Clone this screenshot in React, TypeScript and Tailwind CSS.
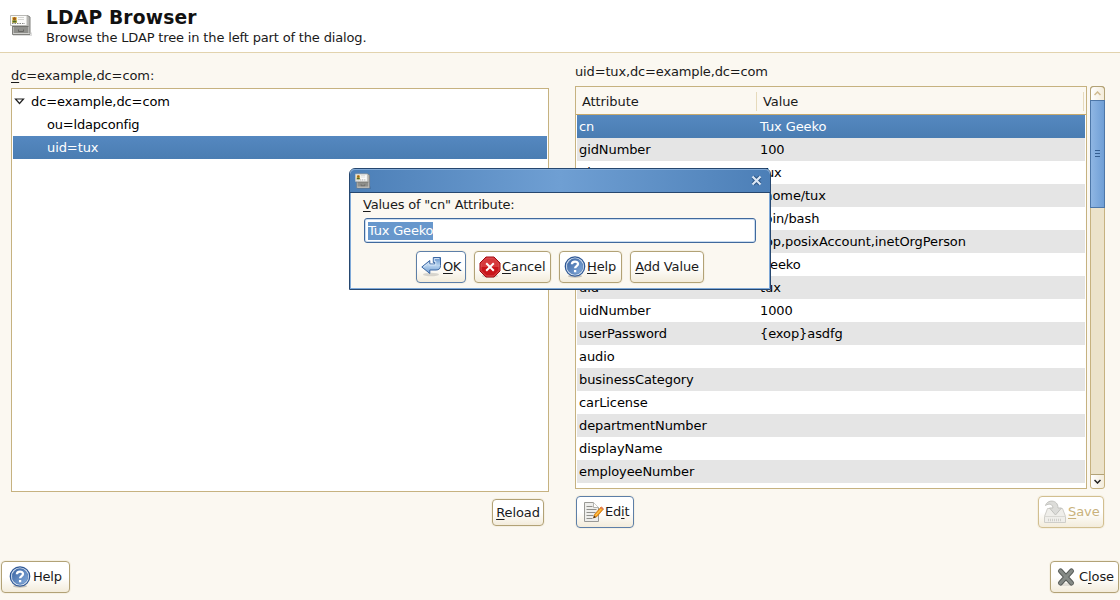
import React from "react";

const ROWS: [string, string][] = [
  ["cn", "Tux Geeko"],
  ["gidNumber", "100"],
  ["givenName", "Tux"],
  ["homeDirectory", "/home/tux"],
  ["loginShell", "/bin/bash"],
  ["objectClass", "top,posixAccount,inetOrgPerson"],
  ["sn", "Geeko"],
  ["uid", "tux"],
  ["uidNumber", "1000"],
  ["userPassword", "{exop}asdfg"],
  ["audio", ""],
  ["businessCategory", ""],
  ["carLicense", ""],
  ["departmentNumber", ""],
  ["displayName", ""],
  ["employeeNumber", ""],
];

function LdapIcon({ className }: { className: string }) {
  return (
    <svg viewBox="0 0 22 22" className={className}>
      <path d="M3 21.500h18.500v-3" fill="none" stroke="#00000022" />
      <path d="M2.500 1.500h15l2.500 1.500v17.500H2.500z" fill="#b4b4b1" stroke="#80807d" />
      <path d="M4 12h14v7H4z" fill="#8f8f8b" />
      <path d="M3 12.500h15.500" stroke="#72726e" />
      <path d="M3 19.500h16.500" stroke="#d0d0cd" />
      <path d="M8.500 15.500v2h5v-2" fill="none" stroke="#666663" />
      <path d="M.5 1.500h16.500v10H.5z" fill="#fbfbfa" stroke="#b9b9b5" />
      <path d="M2 3h5v6H2z" fill="#e9cf72" />
      <circle cx="4.500" cy="4.700" r="1.700" fill="#a45f16" />
      <path d="M2.500 6.500h4v2h-4z" fill="#4f6a24" />
      <path d="M8 3.500h6M8 5.500h6" stroke="#d4d4d0" />
      <path d="M2 9.500h13" stroke="#888" strokeDasharray="1.500 1" />
    </svg>
  );
}

function HelpIcon() {
  return (
    <svg viewBox="0 0 22 22" className="h-[22px] w-[22px] shrink-0">
      <defs>
        <linearGradient id="hb" x1="0" y1="0" x2="1" y2="1">
          <stop offset="0" stopColor="#3a62a0" />
          <stop offset="1" stopColor="#86aede" />
        </linearGradient>
      </defs>
      <ellipse cx="11" cy="20.200" rx="7" ry="1.600" fill="#00000033" />
      <circle cx="11" cy="10.500" r="9.700" fill="#e4edf8" stroke="#2f5896" strokeWidth="1.300" />
      <circle cx="11" cy="10.500" r="7.900" fill="url(#hb)" stroke="#4a73ad" strokeWidth=".6" />
      <path d="M7.900 8.300C7.900 4.700 14 4.700 14 8c0 2.100-2.900 2.100-2.900 4.300M11.100 14v2.200" fill="none" stroke="#fff" strokeWidth="2.300" />
    </svg>
  );
}

function OkIcon() {
  return (
    <svg viewBox="0 0 22 22" className="h-[22px] w-[22px] shrink-0">
      <defs>
        <linearGradient id="ok" x1="0" y1="0" x2="0" y2="1">
          <stop offset="0" stopColor="#5f8fc9" />
          <stop offset=".5" stopColor="#b9d4ef" />
          <stop offset="1" stopColor="#6a99d0" />
        </linearGradient>
      </defs>
      <ellipse cx="10" cy="18.500" rx="8" ry="1.800" fill="#00000022" />
      <path d="M.8 11l8-6.500V8h5V6.500h-1.500V1.500h7.200v8q0 4.500-4.500 4.500H8.800v3.500z" fill="url(#ok)" stroke="#3a66a3" strokeLinejoin="round" />
      <path d="M2.600 11l5.200-4.200V9h7V5.500h-1.500v-3h5" fill="none" stroke="#d9e8f8" strokeWidth=".9" />
    </svg>
  );
}

function CancelIcon() {
  return (
    <svg viewBox="0 0 22 22" className="h-[22px] w-[22px] shrink-0">
      <ellipse cx="11" cy="20" rx="8" ry="1.800" fill="#00000026" />
      <path d="M7 1h8l6 6v8l-6 6H7l-6-6V7z" fill="#c9151b" stroke="#9d0b10" />
      <path d="M7.400 2h7.200L20 7.400v3.600H2V7.400z" fill="#d63a3d" />
      <path d="M7.400 2h7.200L20 7.400v7.200L14.600 20H7.400L2 14.600V7.400z" fill="none" stroke="#e26467" strokeWidth=".7" />
      <path d="M7.200 7.200l7.600 7.600M14.800 7.200l-7.600 7.600" stroke="#fff" strokeWidth="2" />
    </svg>
  );
}

function EditIcon() {
  return (
    <svg viewBox="0 0 22 22" className="h-[22px] w-[22px] shrink-0">
      <path d="M2.500 1.500h9l5 5v14h-14z" fill="#eeeeec" stroke="#9a9a96" strokeLinejoin="round" />
      <path d="M11.500 1.500v5h5" fill="#fff" stroke="#b4b4b0" />
      <path d="M4.500 5.500h6M4.500 8.500h10M4.500 11.500h9M4.500 14.500h7M4.500 17.500h6" stroke="#90908c" />
      <path d="M11.500 17l1-3.500 6.500-7.500 2.500 2-6.500 7.500z" fill="#f59d18" stroke="#c46a08" strokeWidth=".7" />
      <path d="M13.500 14.500l6-6.700" stroke="#ffd166" />
      <path d="M11.300 17.200l.8-2.500 1.800 1.500z" fill="#333" />
      <path d="M18.300 6.800l1.200-1.200 2 2-1 1.200z" fill="#e5795a" />
    </svg>
  );
}

function SaveIcon() {
  return (
    <svg viewBox="0 0 24 24" className="h-6 w-6 shrink-0">
      <path d="M4.500 8.500h15l3 8v6h-21v-6z" fill="#efeeea" stroke="#cfcec9" />
      <path d="M1.500 16.500h21" stroke="#d9d8d3" />
      <path d="M5 20h14" stroke="#d0cfca" strokeWidth="2.500" strokeDasharray="1 1" />
      <path d="M2.500 5.500C4-.5 15-1 15 8h3.500l-6 7-6-7H10C9.500 4 6 3 2.500 5.500z" fill="#dcdcd9" stroke="#c2c2be" />
    </svg>
  );
}

function CloseIcon() {
  return (
    <svg viewBox="0 0 22 22" className="h-[22px] w-[22px] shrink-0">
      <ellipse cx="11" cy="18.500" rx="8" ry="1.600" fill="#00000018" />
      <path d="M5.500 5l11 12M16.500 5l-11 12" stroke="#565a57" strokeWidth="5" strokeLinecap="round" />
      <path d="M5.500 5l11 12M16.500 5l-11 12" stroke="#858a86" strokeWidth="3.200" strokeLinecap="round" />
    </svg>
  );
}

function Button({ className, children }: { className: string; children: React.ReactNode }) {
  return (
    <button
      className={`flex shrink-0 items-center rounded-[4px] border bg-linear-to-b from-white from-50% to-[#f3ecdb] whitespace-nowrap shadow-[0_0_0_1px_#f5f0e3] ${className}`}
    >
      {children}
    </button>
  );
}

function Key({ children }: { children: string }) {
  return <span className="underline decoration-1 underline-offset-2">{children}</span>;
}

export default function App() {
  return (
    <div className="relative flex h-[600px] w-[1120px] flex-col overflow-hidden bg-[#fbf8f1] font-['DejaVu_Sans',sans-serif] text-[13px] leading-[23px] tracking-[-0.09px] text-[#1a1a1a]">
      <header className="flex h-[53px] shrink-0 border-b border-[#e2d3ae] bg-white pl-[10px]">
        <LdapIcon className="mt-[14px] h-[22px] w-[22px]" />
        <div className="pl-[14px]">
          <h1 className="mt-[7px] text-[18.700px] leading-[21px] font-bold tracking-[0.170px] text-[#111]">LDAP Browser</h1>
          <p className="leading-[19px] tracking-[-0.155px]">Browse the LDAP tree in the left part of the dialog.</p>
        </div>
      </header>

      <main className="flex h-[482px] shrink-0 pl-[11px]">
        <section className="flex w-[538px] flex-col pt-[11px]">
          <div className="h-[24px]"><Key>d</Key>c=example,dc=com:</div>
          <div className="h-[404px] border border-[#c6b280] bg-white px-px pt-px">
            <div className="flex h-[23px] items-center">
              <svg viewBox="0 0 11 8" className="ml-[1px] h-2 w-[11px]">
                <path d="M1.500 1h8l-4 4.500z" fill="#fff" stroke="#222" strokeWidth="1.200" />
              </svg>
              <span className="pl-[6px] text-black">dc=example,dc=com</span>
            </div>
            <div className="h-[23px] pl-[34px] tracking-[-0.2px] text-black">ou=ldapconfig</div>
            <div className="h-[23px] bg-linear-to-b from-[#5588c0] to-[#4a7db2] pl-[34px] text-white">uid=tux</div>
          </div>
          <div className="flex justify-end pt-[7px] pr-[5px]">
            <Button className="h-[27px] w-[52px] justify-center border-[#b2a276]"><span><Key>R</Key>eload</span></Button>
          </div>
        </section>

        <section className="ml-[26px] flex w-[530px] flex-col pt-[7px]">
          <div className="h-[26px] tracking-[-0.150px]">uid=tux,dc=example,dc=com</div>
          <div className="flex h-[403px] gap-[3px]">
            <div className="w-[512px] border border-[#c6b280] bg-white px-px">
              <div className="-mx-px flex h-[28px] items-center border-b border-[#c6a96c] bg-[#fbf8f1] pt-[2px] pl-[6px]">
                <span className="w-[174px]">Attribute</span>
                <span className="h-[19px] w-px bg-[#e6dabb]" />
                <span className="flex-1 pl-[6px]">Value</span>
                <span className="mr-[2px] h-[19px] w-px bg-[#e6dabb]" />
              </div>
              {ROWS.map(([name, value], i) => (
                <div
                  key={name}
                  className={`flex h-[23px] pl-[2px] ${
                    i === 0 ? "bg-linear-to-b from-[#5588c0] to-[#4a7db2] text-white" : i % 2 ? "bg-[#e5e5e5] text-black" : "bg-white text-black"
                  }`}
                >
                  <span className="w-[181px]">{name}</span>
                  <span>{value}</span>
                </div>
              ))}
            </div>
            <div className="flex w-[15px] flex-col rounded-[3px] border border-[#c6b280] bg-[#ece3cb]">
              <div className="-mx-px -mt-px flex h-[14px] items-center justify-center rounded-t-[4px] border border-b-0 border-[#b2a276] bg-linear-to-r from-white to-[#f3ecdb]">
                <svg viewBox="0 0 7 5" className="h-[5px] w-[7px]"><path d="M.5 4l3-3 3 3" fill="none" stroke="#d0bb91" strokeWidth="1.500" /></svg>
              </div>
              <div className="-mx-px flex h-[108px] flex-col items-center justify-center gap-[2px] border border-[#4d77a8] bg-linear-to-r from-[#8fb6e3] to-[#6f9fd6] pb-[2px]">
                <span className="h-px w-[5px] bg-[#355f91]" />
                <span className="h-px w-[5px] bg-[#355f91]" />
                <span className="h-px w-[5px] bg-[#355f91]" />
              </div>
              <div className="mt-auto flex h-[14px] items-center justify-center rounded-b-[3px] border-t border-[#b2a276] bg-linear-to-r from-white to-[#f3ecdb]">
                <svg viewBox="0 0 7 5" className="h-[5px] w-[7px]"><path d="M.5 1l3 3 3-3" fill="none" stroke="#222" strokeWidth="1.500" /></svg>
              </div>
            </div>
          </div>
          <div className="flex justify-between pt-[7px] pr-[1px] pl-[1px]">
            <Button className="h-[32px] w-[58px] gap-[1px] border-[#5d7fa8] pl-[5px]"><EditIcon /><span className="pb-[2px] tracking-[-0.2px]">Ed<Key>i</Key>t</span></Button>
            <Button className="h-[32px] w-[66px] gap-[1px] border-[#d2bf90] pl-[4px] text-[#c9b27c]"><SaveIcon /><span className="pb-[2px]"><Key>S</Key>ave</span></Button>
          </div>
        </section>
      </main>

      <footer className="flex justify-between px-[1px] pt-[26px]">
        <Button className="h-[32px] w-[69px] gap-[2px] border-[#b2a276] pl-[7px]"><HelpIcon /><span className="pb-[2px] tracking-[-0.250px]">Help</span></Button>
        <Button className="h-[32px] w-[69px] gap-[2px] border-[#b2a276] pl-[4px]"><CloseIcon /><span className="pb-[2px]">C<Key>l</Key>ose</span></Button>
      </footer>

      <div className="absolute top-[168px] left-[349px] flex h-[122px] w-[422px] flex-col rounded-t-[6px] border border-[#26476f] bg-[#fbf8f1]">
        <div className="flex h-[24px] shrink-0 items-center justify-between rounded-t-[5px] border-b border-[#26476f] bg-linear-to-r from-[#4c7fb7] via-[#6f9fd3] to-[#4c7fb7] pr-[8px] pl-[5px] shadow-[inset_0_1px_0_#82abd8]">
          <LdapIcon className="h-[16px] w-[16px]" />
          <svg viewBox="0 0 11 11" className="h-[11px] w-[11px]">
            <path d="M2 2l7 7M9 2l-7 7" stroke="#2b5485" strokeWidth="4" />
            <path d="M1.500 1.500l8 8M9.500 1.500l-8 8" stroke="#dbe7f4" strokeWidth="2.200" />
          </svg>
        </div>
        <div className="flex flex-1 flex-col border-x border-b border-[#7fa9d8] pr-[13px] pl-[12px]">
          <div className="h-[25px] tracking-[-0.2px]"><Key>V</Key>alues of "cn" Attribute:</div>
          <div className="ml-[1px] flex h-[25px] shrink-0 items-center rounded-[3px] border border-[#40699d] bg-white pl-[3px] shadow-[inset_0_0_0_1px_#c9dcf0]">
            <span className="h-[18px] bg-[#6797cc] leading-[18px] tracking-[-0.2px] text-white">Tux Geeko</span>
          </div>
          <div className="flex gap-[8px] pt-[8px] pl-[53px]">
            <Button className="h-[32px] w-[50px] border-[#5d7fa8] pl-[4px]"><OkIcon /><span className="pb-[2px] tracking-[-0.5px]"><Key>O</Key>K</span></Button>
            <Button className="h-[32px] w-[77px] gap-[1px] border-[#b2a276] pl-[4px]"><CancelIcon /><span className="pb-[2px]"><Key>C</Key>ancel</span></Button>
            <Button className="h-[32px] w-[63px] gap-[1px] border-[#b2a276] pl-[4px]"><HelpIcon /><span className="pb-[2px]"><Key>H</Key>elp</span></Button>
            <Button className="h-[32px] w-[74px] justify-center border-[#b2a276]"><span className="pb-[2px] tracking-[-0.150px]"><Key>A</Key>dd Value</span></Button>
          </div>
        </div>
      </div>
    </div>
  );
}
